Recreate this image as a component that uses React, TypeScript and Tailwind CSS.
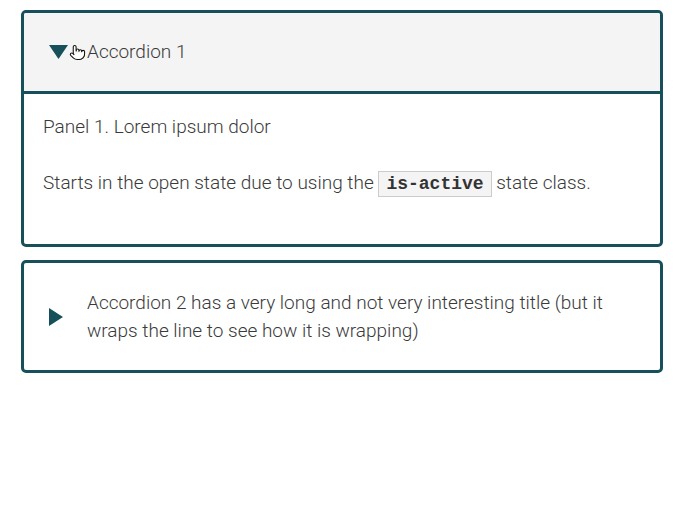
import React from "react";
import { Pointer } from "lucide-react";

export default function App() {
  const font = { fontFamily: "Roboto, 'Liberation Sans', sans-serif" };
  return (
    <div className="w-[694px] h-[516px] bg-white pt-[10px] pl-[21px]" style={font}>
      <div className="w-[642px] flex flex-col gap-[13px] font-light text-[19px] leading-[28px] text-[#3a3a3a]">
        <div className="border-[3px] border-[#17505a] rounded-[5px] overflow-hidden">
          <div className="relative h-[81px] bg-[#f4f4f4] border-b-[3px] border-[#17505a] flex items-center pl-[25px] gap-[19px]">
            <svg width="19" height="14" viewBox="0 0 19 14" className="shrink-0">
              <polygon points="0,0 19,0 9.5,14" fill="#17505a" />
            </svg>
            <span>Accordion 1</span>
            <Pointer
              className="absolute left-[45px] top-[31px]"
              size={17}
              strokeWidth={1.5}
              color="#111"
              fill="#fff"
            />
          </div>
          <div className="px-[19px] pt-[19px] pb-[19px]">
            <p className="mb-[28px]">Panel 1. Lorem ipsum dolor</p>
            <p className="mb-[28px]">
              Starts in the open state due to using the{" "}
              <code
                className="inline-block h-[26px] leading-[24px] px-[7px] bg-[#f4f4f4] border border-[#cccccc] text-[18px] font-bold text-[#333]"
                style={{ fontFamily: "'Liberation Mono', 'Courier New', monospace" }}
              >
                is-active
              </code>{" "}
              state class.
            </p>
          </div>
        </div>
        <div className="border-[3px] border-[#17505a] rounded-[5px] flex items-center pl-[25px] pr-[24px] pt-[26px] pb-[25px] gap-[24px]">
          <svg width="14" height="18" viewBox="0 0 14 18" className="shrink-0">
            <polygon points="0,0 14,9 0,18" fill="#17505a" />
          </svg>
          <span>
            Accordion 2 has a very long and not very interesting title (but it wraps the line to see how it is wrapping)
          </span>
        </div>
      </div>
    </div>
  );
}
